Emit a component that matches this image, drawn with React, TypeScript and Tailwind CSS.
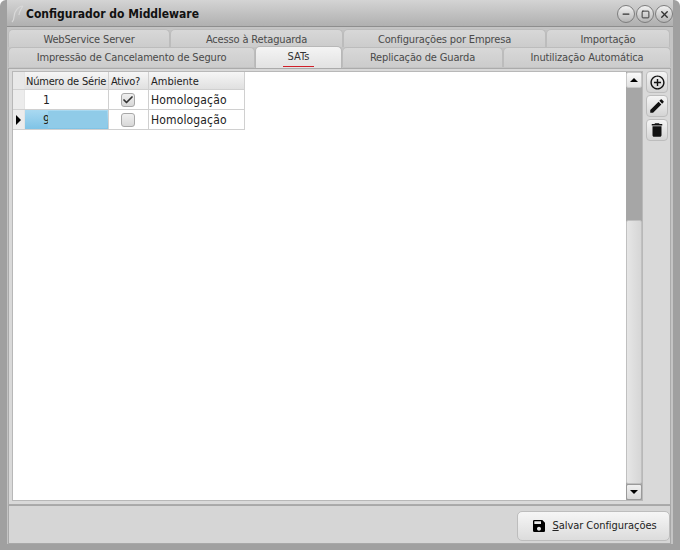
import { Check, Minus, Square, X } from "lucide-react";
import { MdAddCircleOutline, MdDelete, MdEdit, MdSave } from "react-icons/md";
import type { ReactNode } from "react";

const font = { fontFamily: '"DejaVu Sans Condensed", "DejaVu Sans", sans-serif' };

const ROW_ONE = [
  { label: "WebService Server", w: "w-[162px]" },
  { label: "Acesso à Retaguarda", w: "w-[173px]" },
  { label: "Configurações por Empresa", w: "w-[203px]" },
  { label: "Importação", w: "w-[124px]" },
];

const ROW_TWO = [
  { label: "Impressão de Cancelamento de Seguro", w: "w-[247px]" },
  { label: "SATs", w: "w-[87px]", active: true },
  { label: "Replicação de Guarda", w: "w-[161px]" },
  { label: "Inutilização Automática", w: "w-[168px]" },
];

function Tab({ label, w, active, h = "h-[20px] pt-px" }: { label: string; w: string; active?: boolean; h?: string }) {
  if (active) {
    return (
      <div className={`${w} relative z-10 -mt-[1px] flex h-[22px] shrink-0 items-start justify-center rounded-t-[5px] border border-b-0 border-[#b8b8b8] bg-gradient-to-b from-[#f4f4f4] to-[#e2e2e2] pt-px text-[#333]`}>
        <span className="border-b border-[#d0202a] px-[5px] pb-[1px] leading-[17px]">{label}</span>
      </div>
    );
  }
  return (
    <div className={`${w} ${h} flex shrink-0 items-center justify-center whitespace-nowrap rounded-t-[5px] border border-b-0 border-[#bcbcbc] bg-gradient-to-b from-[#d8d8d8] to-[#cccccc] tracking-[-0.15px] text-[#4a4a4a]`}>
      {label}
    </div>
  );
}

function WinButton({ children }: { children: ReactNode }) {
  return (
    <div className="flex h-[18px] w-[18px] items-center justify-center rounded-full border border-[#7d7d7d] bg-gradient-to-b from-[#f2f2f2] to-[#b5b5b5] text-[#333]">
      {children}
    </div>
  );
}

function SideButton({ children }: { children: ReactNode }) {
  return (
    <div className="flex h-[22px] w-[22px] items-center justify-center rounded-[4px] border border-[#bdbdbd] bg-gradient-to-b from-[#f5f5f5] to-[#d4d4d4] text-[#111]">
      {children}
    </div>
  );
}

function Row({ serial, checked, selected }: { serial: string; checked?: boolean; selected?: boolean }) {
  return (
    <div className="flex h-[20px] w-[232px] border-b border-[#d0d0d0]">
      <div className="flex w-[12px] items-center justify-center border-r border-[#e4e4e4] bg-[#ececec]">
        {selected && <div className="h-0 w-0 border-y-[5px] border-l-[5px] border-y-transparent border-l-black" />}
      </div>
      <div className={`relative w-[84px] whitespace-nowrap border-r border-[#d0d0d0] pl-[18px] text-[12px] leading-[20px] text-[#222] ${selected ? "bg-gradient-to-b from-[#a9d9f1] to-[#7fc3e6]" : ""}`}>
        {serial}
        {selected && <div className="absolute bottom-[1px] left-[23px] right-[1px] top-[1px] bg-[#90cbe8]" />}
      </div>
      <div className="flex w-[40px] items-center justify-center border-r border-[#d0d0d0] pr-px">
        <div className="flex h-[14px] w-[14px] items-center justify-center rounded-[3px] border border-[#a8a8a8] bg-gradient-to-b from-[#f0f0f0] to-[#d8d8d8]">
          {checked && <Check size={12} strokeWidth={3.5} className="text-[#333]" />}
        </div>
      </div>
      <div className="w-[96px] border-r border-[#d0d0d0] pl-[2px] text-[12px] leading-[20px] tracking-[0.15px] text-[#222]">Homologação</div>
    </div>
  );
}

export default function App() {
  return (
    <div style={font} className="flex h-[550px] w-[680px] flex-col overflow-hidden rounded-t-[6px] border-x-[7px] border-b-[6px] border-[#a0a0a0] bg-[#d6d6d6] text-[11px]">
      <div className="-mx-[7px] flex h-[27px] shrink-0 items-center border-b border-[#8e8e8e] bg-gradient-to-b from-[#d4d4d4] to-[#b0b0b0] pl-[10px] pr-[7px] pt-[2px]">
        <svg width="16" height="20" viewBox="0 0 16 20" fill="none">
          <path d="M13 2C8 2 4 8 4 13c0 2-1 4-2 5M13 2c-2 3-4 6-4 9" stroke="#d8d8d8" strokeWidth="1.2" />
        </svg>
        <span className="text-[12px] font-bold text-[#111]">Configurador do Middleware</span>
        <div className="ml-auto flex gap-px">
          <WinButton><Minus size={10} strokeWidth={3} /></WinButton>
          <WinButton><Square size={9} strokeWidth={2.5} /></WinButton>
          <WinButton><X size={11} strokeWidth={3} /></WinButton>
        </div>
      </div>

      <div className="flex min-h-0 flex-1 flex-col bg-[#c4c4c4] pt-[2px]">
        <div className="ml-px flex">
          {ROW_ONE.map((t) => <Tab key={t.label} {...t} h="h-[18px] pt-[3px]" />)}
        </div>
        <div className="ml-px flex">
          {ROW_TWO.map((t) => <Tab key={t.label} {...t} />)}
        </div>

        <div className="ml-px flex h-[437px] w-[663px] shrink-0 gap-[3px] border border-[#ababab] bg-[#d9d9d9] pb-[3px] pl-[3px] pr-[2px] pt-[2px]">
          <div className="flex min-w-0 flex-1 border border-[#b8b8b8] bg-white">
            <div className="min-w-0 flex-1">
              <div className="flex h-[18px] w-[232px] whitespace-nowrap border-b border-[#d0d0d0] bg-gradient-to-b from-[#f6f6f6] to-[#e0e0e0] leading-[19px] text-[#222]">
                <div className="w-[12px] border-r border-[#e4e4e4] bg-[#e8e8e8]" />
                <div className="w-[84px] border-r border-[#d0d0d0] pl-px tracking-[-0.2px]">Número de Série</div>
                <div className="w-[40px] border-r border-[#d0d0d0] pl-[2px] tracking-[-0.2px]">Ativo?</div>
                <div className="w-[96px] border-r border-[#d0d0d0] pl-[2px]">Ambiente</div>
              </div>
              <Row serial="1" checked />
              <Row serial="9" selected />
            </div>
            <div className="flex w-[16px] shrink-0 flex-col bg-[#a6a6a6]">
              <div className="flex h-[16px] items-center justify-center rounded-[2px] border border-[#c8c8c8] bg-gradient-to-b from-[#fafafa] to-[#e2e2e2]">
                <div className="h-0 w-0 border-x-[4px] border-b-[4px] border-x-transparent border-b-black" />
              </div>
              <div className="h-[132px]" />
              <div className="flex-1 rounded-[2px] border border-[#c0c0c0] bg-gradient-to-r from-[#e6e6e6] to-[#d6d6d6]" />
              <div className="flex h-[16px] items-center justify-center rounded-[2px] border border-[#9a9a9a] bg-gradient-to-b from-[#f0f0f0] to-[#d8d8d8]">
                <div className="h-0 w-0 border-x-[4px] border-t-[4px] border-x-transparent border-t-black" />
              </div>
            </div>
          </div>
          <div className="flex w-[22px] shrink-0 flex-col gap-[2px]">
            <SideButton><MdAddCircleOutline size={17} /></SideButton>
            <SideButton><MdEdit size={18} /></SideButton>
            <SideButton><MdDelete size={18} /></SideButton>
          </div>
        </div>

        <div className="ml-px flex min-h-0 w-[663px] flex-1 items-start justify-end border border-[#a8a8a8] bg-[#d6d6d6] pt-[5px]">
          <div className="flex h-[30px] w-[153px] items-center justify-center gap-[5px] rounded-[5px] border border-[#bdbdbd] bg-gradient-to-b from-[#f6f6f6] to-[#dcdcdc] pl-px text-[#222]">
            <MdSave size={16} className="text-black" />
            <span className="tracking-[-0.05px]"><span className="underline">S</span>alvar Configurações</span>
          </div>
        </div>
      </div>
    </div>
  );
}
